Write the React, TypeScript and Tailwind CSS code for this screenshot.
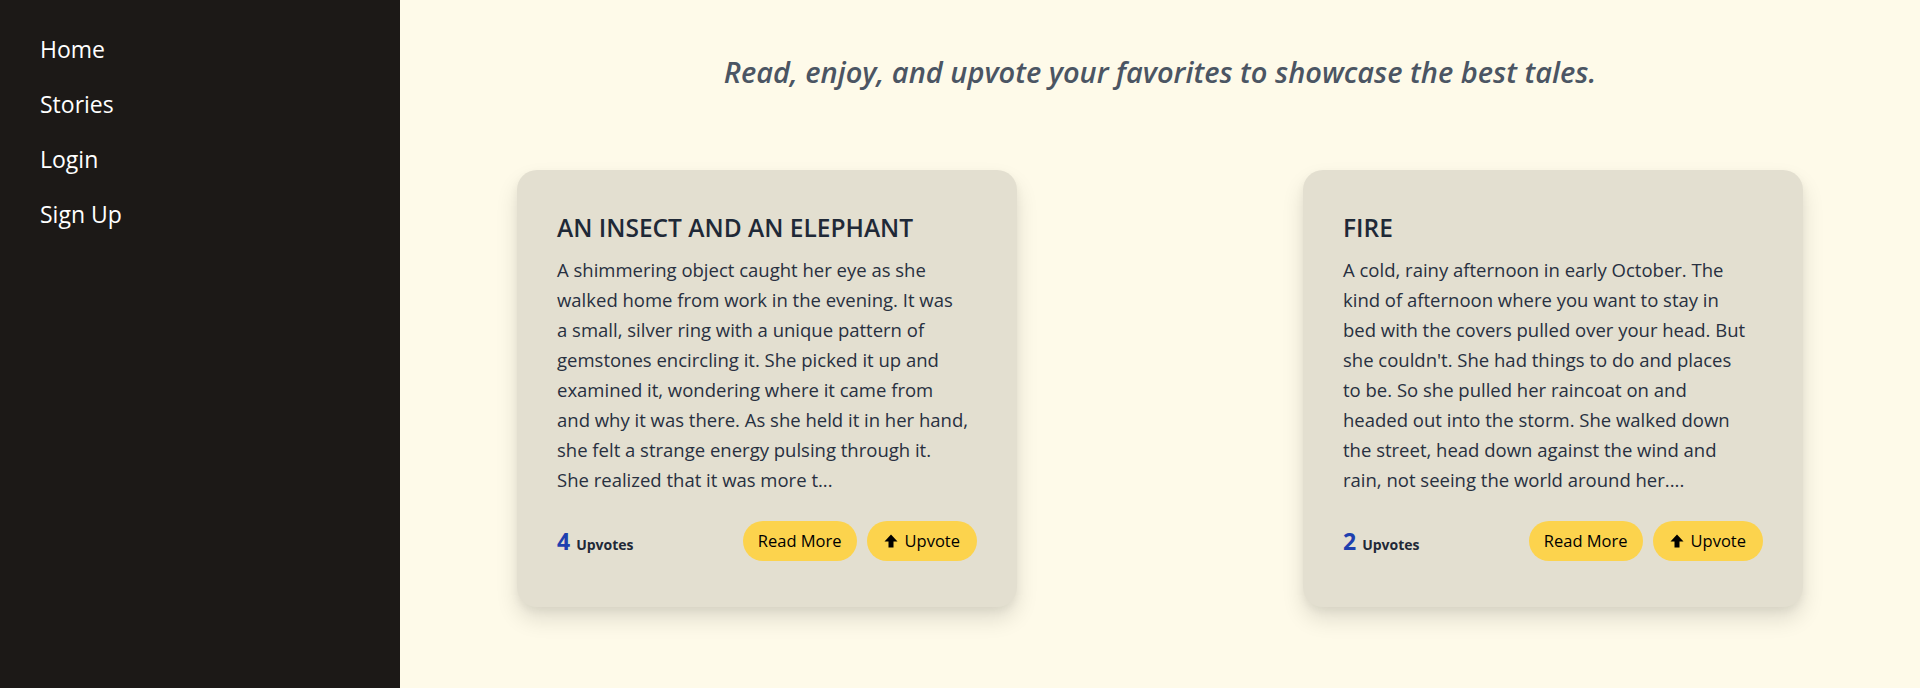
import type { ReactNode } from "react";

const navLinks = ["Home", "Stories", "Login", "Sign Up"];

const stories = [
  {
    title: "AN INSECT AND AN ELEPHANT",
    votes: 4,
    lines: [
      "A shimmering object caught her eye as she",
      "walked home from work in the evening. It was",
      "a small, silver ring with a unique pattern of",
      "gemstones encircling it. She picked it up and",
      "examined it, wondering where it came from",
      "and why it was there. As she held it in her hand,",
      "she felt a strange energy pulsing through it.",
      "She realized that it was more t...",
    ],
  },
  {
    title: "FIRE",
    votes: 2,
    lines: [
      "A cold, rainy afternoon in early October. The",
      "kind of afternoon where you want to stay in",
      "bed with the covers pulled over your head. But",
      "she couldn't. She had things to do and places",
      "to be. So she pulled her raincoat on and",
      "headed out into the storm. She walked down",
      "the street, head down against the wind and",
      "rain, not seeing the world around her....",
    ],
  },
];

function ArrowUp() {
  return (
    <svg width="14" height="14" viewBox="0 0 14 14" fill="currentColor">
      <path d="M7 0.5 L13.5 7.5 L9.5 7.5 L9.5 13.5 L4.5 13.5 L4.5 7.5 L0.5 7.5 Z" />
    </svg>
  );
}

function PillButton({ children, className }: { children: ReactNode; className?: string }) {
  return (
    <button
      className={`flex items-center gap-[7px] h-10 rounded-full bg-[#fcd34d] text-black text-[16.5px] leading-none ${className ?? ""}`}
    >
      {children}
    </button>
  );
}

function StoryCard({ title, votes, lines }: { title: string; votes: number; lines: string[] }) {
  return (
    <div className="w-[500px] bg-[#e3dfd0] rounded-[20px] px-10 pt-[42px] pb-[46px] shadow-[0_12px_22px_rgba(0,0,0,0.12),0_4px_8px_rgba(0,0,0,0.05)]">
      <h2 className="text-[24.5px] leading-8 font-semibold text-[#1f2937]">{title}</h2>
      <p className="mt-[11px] text-[18.5px] leading-[30px] text-[#283040]">
        {lines.map((line) => (
          <span key={line} className="block whitespace-nowrap">
            {line}
          </span>
        ))}
      </p>
      <div className="mt-[26px] flex items-center justify-between">
        <div className="flex items-baseline gap-[6px]">
          <span className="text-[23px] font-bold text-[#1e40af]">{votes}</span>
          <span className="text-[14px] font-bold text-[#1f2937]">Upvotes</span>
        </div>
        <div className="flex gap-[10px]">
          <PillButton className="px-[15px]">Read More</PillButton>
          <PillButton className="pl-[17px] pr-[17px]">
            <ArrowUp />
            Upvote
          </PillButton>
        </div>
      </div>
    </div>
  );
}

export default function App() {
  return (
    <div className="flex min-h-screen font-['Open_Sans',sans-serif]">
      <aside className="w-[400px] shrink-0 bg-[#1c1917] px-10 pt-[33px]">
        <nav className="flex flex-col gap-[23px]">
          {navLinks.map((link) => (
            <a key={link} href="#" className="text-[23px] leading-8 text-white">
              {link}
            </a>
          ))}
        </nav>
      </aside>

      <main className="flex-1 bg-[#fefae9] flex flex-col items-center pt-[54px]">
        <h1 className="text-[29px] leading-9 font-semibold italic text-[#4b5563]">
          Read, enjoy, and upvote your favorites to showcase the best tales.
        </h1>
        <div className="w-full flex justify-between px-[117px] mt-[80px] pb-20">
          {stories.map((story) => (
            <StoryCard key={story.title} {...story} />
          ))}
        </div>
      </main>
    </div>
  );
}
